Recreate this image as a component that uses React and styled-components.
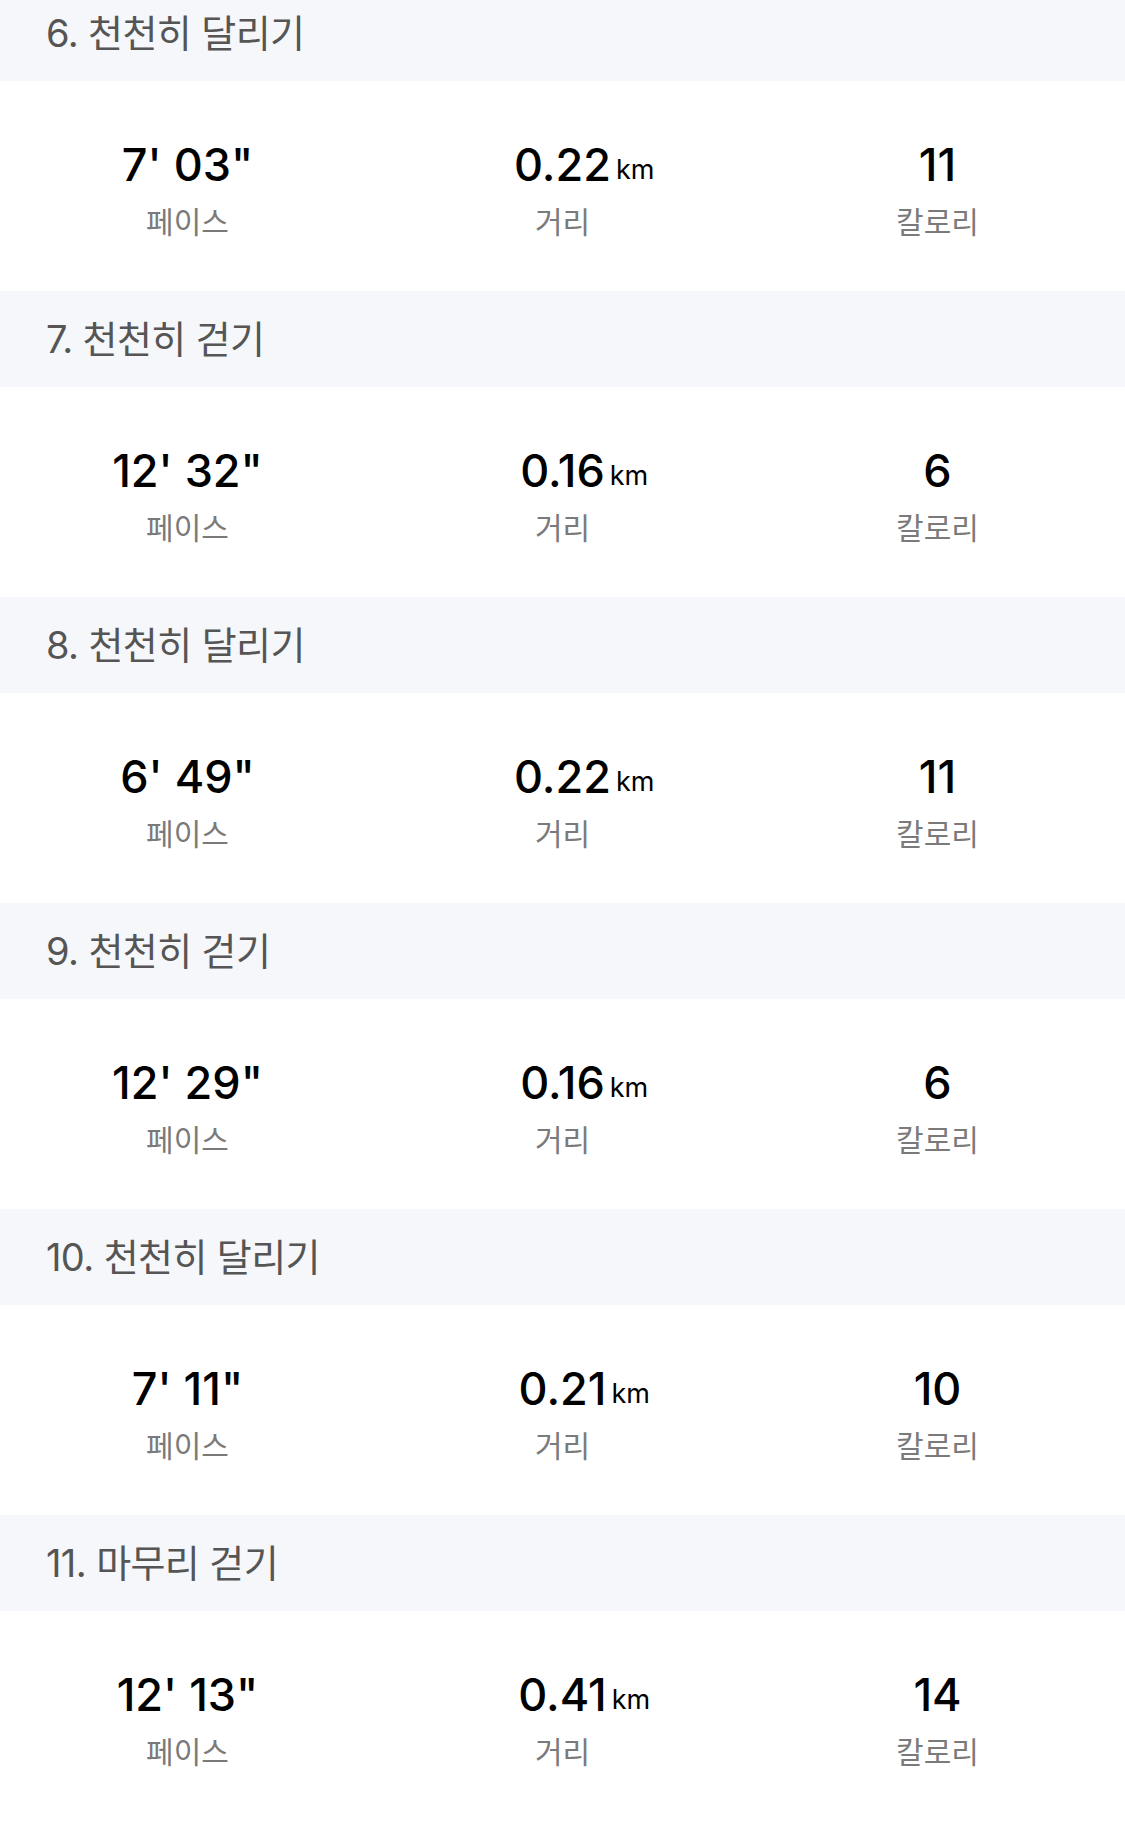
import React from 'react';
import styled, { createGlobalStyle } from 'styled-components';

const GlobalStyle = createGlobalStyle`
  html, body {
    margin: 0;
    padding: 0;
    background: #ffffff;
  }
  body {
    font-family: Inter, "Noto Sans CJK KR", "Noto Sans", sans-serif;
    -webkit-font-smoothing: antialiased;
  }
`;

const intervals = [
  { title: '6. 천천히 달리기', pace: "7' 03\"", distance: '0.22', calories: '11' },
  { title: '7. 천천히 걷기', pace: "12' 32\"", distance: '0.16', calories: '6' },
  { title: '8. 천천히 달리기', pace: "6' 49\"", distance: '0.22', calories: '11' },
  { title: '9. 천천히 걷기', pace: "12' 29\"", distance: '0.16', calories: '6' },
  { title: '10. 천천히 달리기', pace: "7' 11\"", distance: '0.21', calories: '10' },
  { title: '11. 마무리 걷기', pace: "12' 13\"", distance: '0.41', calories: '14' },
];

const App = () => (
  <>
    <GlobalStyle />
    <List>
      {intervals.map(item => (
        <Section key={item.title}>
          <Header>{item.title}</Header>
          <Stats>
            <Stat>
              <Value>{item.pace}</Value>
              <Label>페이스</Label>
            </Stat>
            <Stat>
              <Value>
                {item.distance}
                <Unit>km</Unit>
              </Value>
              <Label>거리</Label>
            </Stat>
            <Stat>
              <Value>{item.calories}</Value>
              <Label>칼로리</Label>
            </Stat>
          </Stats>
        </Section>
      ))}
    </List>
  </>
);

const List = styled.div`
  margin-top: -15px;
  display: flex;
  flex-direction: column;
  padding-bottom: 19px;
`;

const Section = styled.section`
  display: flex;
  flex-direction: column;
`;

const Header = styled.div`
  height: 96px;
  box-sizing: border-box;
  display: flex;
  align-items: center;
  padding: 0 0 5px 46px;
  background: #f6f7fa;
  color: #555555;
  font-size: 38px;
  letter-spacing: -0.6px;
`;

const Stats = styled.div`
  height: 210px;
  box-sizing: border-box;
  padding-top: 8px;
  display: grid;
  grid-template-columns: repeat(3, 1fr);
  align-items: center;
  background: #ffffff;
`;

const Stat = styled.div`
  display: flex;
  flex-direction: column;
  align-items: center;
  gap: 14px;
`;

const Value = styled.div`
  position: relative;
  font-size: 45px;
  font-weight: 500;
  line-height: 50px;
  color: #000000;
`;

// unit hangs to the right so the number itself stays centred
const Unit = styled.span`
  position: absolute;
  left: 100%;
  bottom: 5px;
  margin-left: 5px;
  font-size: 27px;
  font-weight: 400;
  line-height: 30px;
`;

const Label = styled.div`
  font-size: 30px;
  line-height: 36px;
  color: #7a7a7a;
`;

export default App;
